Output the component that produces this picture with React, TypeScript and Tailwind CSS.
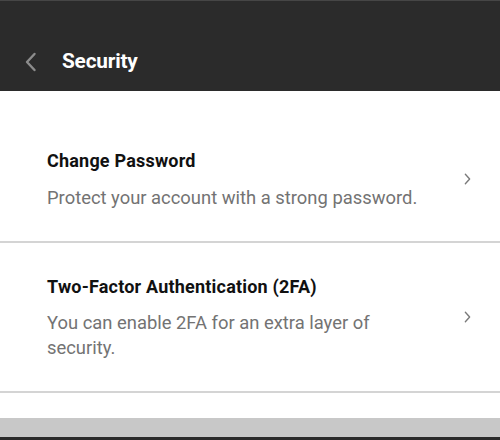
import React from "react";

function Chevron({ className }: { className?: string }) {
  return (
    <svg className={className} viewBox="0 0 8 14" fill="none" stroke="currentColor" strokeWidth="1.6" strokeLinecap="round" strokeLinejoin="round">
      <path d="M1.5 1.5 L6.5 7 L1.5 12.5" />
    </svg>
  );
}

function Row({ title, desc, pt, pb }: { title: string; desc: string; pt: string; pb: string }) {
  return (
    <div className={`flex items-center border-b-2 border-[#d4d4d4] pl-[47px] pr-[29px] ${pt} ${pb}`}>
      <div className="flex-1 min-w-0 pr-[40px]">
        <div className="text-[18px] leading-[24px] font-bold tracking-[0.2px] text-[#111111]">{title}</div>
        <div className="mt-[11.5px] text-[18.4px] leading-[25px] text-[#737373]">{desc}</div>
      </div>
      <Chevron className="w-[7px] h-[12px] text-[#7a7a7a]" />
    </div>
  );
}

export default function App() {
  return (
    <div className="w-[500px] h-[440px] overflow-hidden bg-white flex flex-col" style={{ fontFamily: "Roboto, 'Noto Sans', sans-serif" }}>
      <div className="h-[91px] shrink-0 bg-[#2b2b2b] border-t border-[#464646] flex items-center pl-[24px] pt-[31px]">
        <svg className="w-[13px] h-[20px] text-[#8c8c8c]" viewBox="0 0 13 20" fill="none" stroke="currentColor" strokeWidth="2.4" strokeLinecap="round" strokeLinejoin="round">
          <path d="M10.5 2 L3 10 L10.5 18" />
        </svg>
        <div className="ml-[25px] text-[20.8px] font-bold text-white tracking-[-0.2px]">Security</div>
      </div>
      <Row title="Change Password" desc="Protect your account with a strong password." pt="pt-[58px]" pb="pb-[31px]" />
      <Row title="Two-Factor Authentication (2FA)" desc="You can enable 2FA for an extra layer of security." pt="pt-[32px]" pb="pb-[31px]" />
      <div className="h-[25px] shrink-0 bg-white" />
      <div className="h-[19px] shrink-0 bg-[#c8c8c8]" />
      <div className="flex-1 bg-[#2b2b2b]" />
    </div>
  );
}
